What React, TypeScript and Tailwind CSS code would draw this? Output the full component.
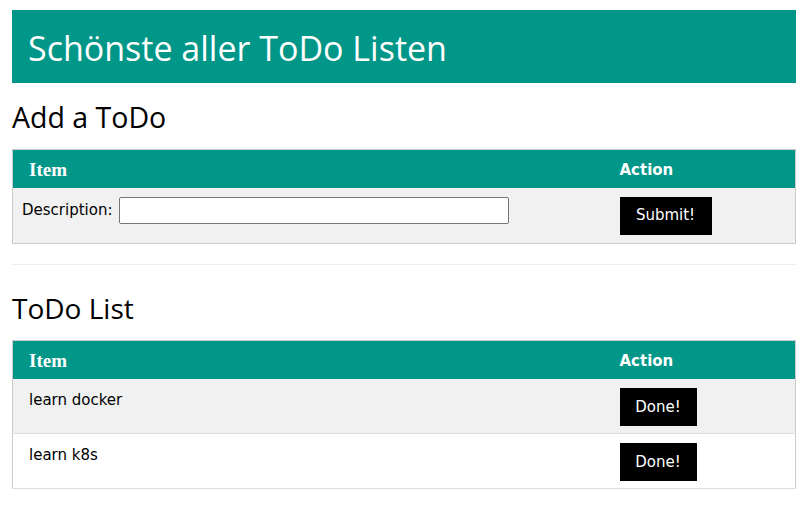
import React, { useState } from 'react';

type Todo = { id: number; text: string };

const App: React.FC = () => {
  const [todos, setTodos] = useState<Todo[]>([
    { id: 1, text: 'learn docker' },
    { id: 2, text: 'learn k8s' },
  ]);
  const [desc, setDesc] = useState('');

  const addTodo = () => {
    if (!desc.trim()) return;
    setTodos(prev => [...prev, { id: Date.now(), text: desc }]);
    setDesc('');
  };

  const done = (id: number) => setTodos(prev => prev.filter(t => t.id !== id));

  return (
    <div className="min-h-[512px] bg-white text-black font-['DejaVu_Sans',Verdana,sans-serif] text-[15px]">
      <div className="ml-3 w-[784px] pt-[10px]">
        <div className="h-[73px] bg-[#009688] text-white flex items-center pl-[16px]">
          <h1 className="text-[34px] font-normal leading-none pt-[3px] font-['Open_Sans',sans-serif]">
            Schönste aller ToDo Listen
          </h1>
        </div>

        <h2 className="h-[66px] flex items-center text-[28.5px] font-normal leading-none pt-[3px] font-['Open_Sans',sans-serif]">
          Add a ToDo
        </h2>

        <table className="w-full border border-[#ccc]">
          <thead>
            <tr className="bg-[#009688] text-white h-[38px] text-left">
              <th className="pl-[16px] pt-[2px] font-bold text-[19px] font-['Liberation_Serif',serif]">Item</th>
              <th className="w-[192px] pl-[16px] pt-[3px] font-bold text-[15px]">Action</th>
            </tr>
          </thead>
          <tbody>
            <tr className="bg-[#f1f1f1] h-[55px] align-top">
              <td className="pl-[9px] pt-[9px]">
                <div className="flex items-center gap-[7px]">
                  <label htmlFor="desc">Description:</label>
                  <input
                    id="desc"
                    value={desc}
                    onChange={e => setDesc(e.target.value)}
                    className="w-[390px] h-[27px] bg-white border border-[#767676] rounded-[2px] px-1 outline-none"
                  />
                </div>
              </td>
              <td className="pl-[16px] pt-[9px] pb-[8px]">
                <button
                  onClick={addTodo}
                  className="h-[38px] w-[92px] bg-black text-white text-[15px]"
                >
                  Submit!
                </button>
              </td>
            </tr>
          </tbody>
        </table>

        <hr className="mt-[20px] border-0 border-t border-[#eee]" />

        <h2 className="h-[75px] flex items-end pb-[18px] text-[28px] font-normal leading-none font-['Open_Sans',sans-serif]">
          ToDo List
        </h2>

        <table className="w-full border border-[#ccc]">
          <thead>
            <tr className="bg-[#009688] text-white h-[39px] text-left">
              <th className="pl-[16px] pt-[2px] font-bold text-[19px] font-['Liberation_Serif',serif]">Item</th>
              <th className="w-[192px] pl-[16px] pt-[3px] font-bold text-[15px]">Action</th>
            </tr>
          </thead>
          <tbody>
            {todos.map((t, i) => (
              <tr
                key={t.id}
                className={`h-[54px] align-top border-b border-[#ddd] ${i % 2 === 0 ? 'bg-[#f1f1f1]' : 'bg-white'}`}
              >
                <td className="pl-[16px] pt-[10px]">{t.text}</td>
                <td className="pl-[16px] pt-[9px] pb-[7px]">
                  <button
                    onClick={() => done(t.id)}
                    className="h-[38px] w-[77px] bg-black text-white text-[15px]"
                  >
                    Done!
                  </button>
                </td>
              </tr>
            ))}
          </tbody>
        </table>
      </div>
    </div>
  );
};

export default App;
